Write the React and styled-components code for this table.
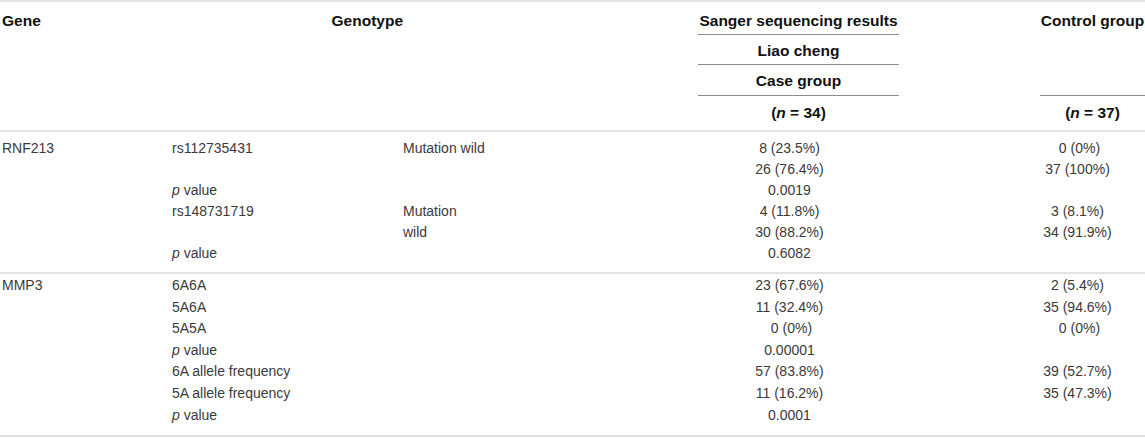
import styled, { createGlobalStyle } from "styled-components";

const COLUMNS = "172px 231px 295px 201px 141px 105px";

const GlobalStyle = createGlobalStyle`
  body {
    margin: 0;
    background: #ffffff;
    font-family: "Liberation Sans", Arial, sans-serif;
  }
`;

const pValue = (
  <>
    <i>p</i> value
  </>
);

const sections = [
  {
    id: "rnf213",
    padTop: 6,
    padBottom: 8,
    rowHeight: 21,
    rows: [
      ["RNF213", "rs112735431", "Mutation wild", "8 (23.5%)", "\u00a00 (0%)"],
      ["", "", "", "26 (76.4%)", "37 (100%)"],
      ["", pValue, "", "0.0019", ""],
      ["", "rs148731719", "Mutation", "4 (11.8%)", "3 (8.1%)"],
      ["", "", "wild", "30 (88.2%)", "34 (91.9%)"],
      ["", pValue, "", "0.6082", ""],
    ],
  },
  {
    id: "mmp3",
    padTop: 1,
    padBottom: 9,
    rowHeight: 21.6,
    rows: [
      ["MMP3", "6A6A", "", "23 (67.6%)", "2 (5.4%)"],
      ["", "5A6A", "", "11 (32.4%)", "35 (94.6%)"],
      ["", "5A5A", "", "\u00a00 (0%)", "\u00a00 (0%)"],
      ["", pValue, "", "0.00001", ""],
      ["", "6A allele frequency", "", "57 (83.8%)", "39 (52.7%)"],
      ["", "5A allele frequency", "", "11 (16.2%)", "35 (47.3%)"],
      ["", pValue, "", "0.0001", ""],
    ],
  },
];

export default function App() {
  return (
    <>
      <GlobalStyle />
      <Table>
        <Head>
          <HeadCell $col="1" $row="1" $align="left" $indent>
            Gene
          </HeadCell>
          <HeadCell $col="2" $row="1" $align="right">
            Genotype
          </HeadCell>
          <HeadCell $col="4" $row="1" $line $pad="10px 0 4px">
            Sanger sequencing results
          </HeadCell>
          <HeadCell $col="4" $row="2" $line $pad="7px 0 4px">
            Liao cheng
          </HeadCell>
          <HeadCell $col="4" $row="3" $line $pad="7px 0 5px">
            Case group
          </HeadCell>
          <HeadCell $col="4" $row="4" $pad="8px 0 8px">
            (<i>n</i> = 34)
          </HeadCell>
          <HeadCell $col="6" $row="1 / 4" $line $pad="10px 0 0">
            Control group
          </HeadCell>
          <HeadCell $col="6" $row="4" $pad="8px 0 8px">
            (<i>n</i> = 37)
          </HeadCell>
        </Head>

        {sections.map(({ id, padTop, padBottom, rowHeight, rows }) => (
          <Section key={id} $padTop={padTop} $padBottom={padBottom}>
            {rows.map(([gene, genotype, kind, sanger, control], i) => (
              <Row key={i} $height={rowHeight}>
                <Cell $indent>{gene}</Cell>
                <Cell>{genotype}</Cell>
                <Cell>{kind}</Cell>
                <ValueCell $padRight={18}>{sanger}</ValueCell>
                <Cell />
                <ValueCell $padRight={30}>{control}</ValueCell>
              </Row>
            ))}
          </Section>
        ))}
      </Table>
    </>
  );
}

const Table = styled.div`
  width: 1145px;
  border-top: 2px solid #e3e3e3;
`;

const Head = styled.div`
  display: grid;
  grid-template-columns: ${COLUMNS};
  grid-template-rows: repeat(4, auto);
  border-bottom: 2px solid #e3e3e3;
  color: #111111;
  font-size: 15.5px;
  font-weight: bold;
`;

const HeadCell = styled.div`
  grid-column: ${(p) => p.$col};
  grid-row: ${(p) => p.$row};
  text-align: ${(p) => p.$align || "center"};
  padding: ${(p) => p.$pad || "10px 0 4px"};
  padding-left: ${(p) => (p.$indent ? "2px" : "0")};
  line-height: 18px;
  white-space: nowrap;
  border-bottom: ${(p) => (p.$line ? "1px solid #8c8c8c" : "none")};
`;

const Section = styled.div`
  padding: ${(p) => p.$padTop}px 0 ${(p) => p.$padBottom}px;
  border-bottom: 2px solid #e3e3e3;
`;

const Row = styled.div`
  display: grid;
  grid-template-columns: ${COLUMNS};
  height: ${(p) => p.$height}px;
  line-height: ${(p) => p.$height}px;
  font-size: 14px;
  color: #3a3a3a;
`;

const Cell = styled.div`
  padding-left: ${(p) => (p.$indent ? "2px" : "0")};
  white-space: nowrap;
`;

const ValueCell = styled.div`
  text-align: center;
  padding-right: ${(p) => p.$padRight}px;
  white-space: pre;
`;
